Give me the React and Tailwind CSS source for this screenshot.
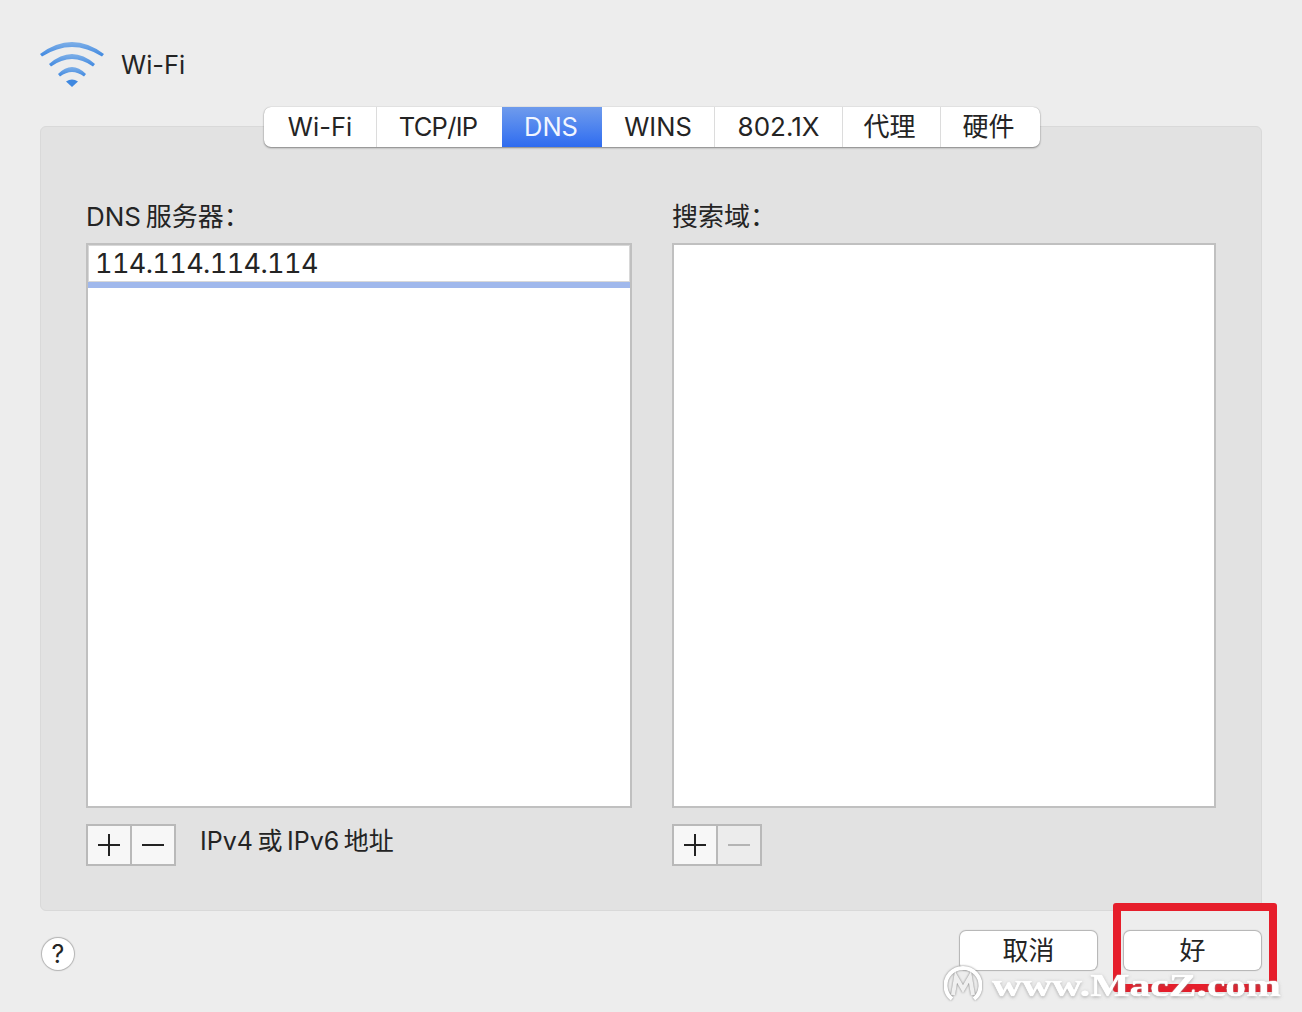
import React from 'react';

const FONT = "font-['Inter','Noto_Sans_CJK_SC',sans-serif]";

const TABS = [
  { label: 'Wi-Fi', width: 'w-[113px]' },
  { label: 'TCP/IP', width: 'w-[125px]', tight: true },
  { label: 'DNS', width: 'w-[100px]', active: true },
  { label: 'WINS', width: 'w-[113px]' },
  { label: '802.1X', width: 'w-[128px]', wide: true },
  { label: '代理', width: 'w-[98px]', cjk: true },
  { label: '硬件', width: 'w-[99px]', cjk: true },
];

const WifiIcon = () => (
  <svg width="64" height="46" viewBox="40 42 64 46">
    <defs>
      <linearGradient id="wifi" x1="0" y1="0" x2="0" y2="1">
        <stop offset="0" stopColor="#7fb0e8" />
        <stop offset="1" stopColor="#3f88e0" />
      </linearGradient>
    </defs>
    <path d="M40 55 Q72 31 104 55 L102 57.5 Q72 38.5 42 57.5 Z" fill="url(#wifi)" />
    <path d="M49 65 Q72 45 95 65 L93 67.5 Q72 52.5 51 67.5 Z" fill="url(#wifi)" />
    <path d="M58 75 Q72 61 86 75 L84 77.5 Q72 68.5 60 77.5 Z" fill="url(#wifi)" />
    <path d="M66 82.5 Q72 78.5 78 82.5 L72 88 Z" fill="#3f88e0" />
  </svg>
);

const PlusIcon = () => (
  <svg width="24" height="24" viewBox="0 0 24 24" stroke="#222" strokeWidth="2">
    <path d="M1 12H23M12 1V23" />
  </svg>
);

const MinusIcon = ({ color }) => (
  <svg width="24" height="24" viewBox="0 0 24 24" stroke={color} strokeWidth="2">
    <path d="M1 12H23" />
  </svg>
);

const AddRemove = ({ removeEnabled }) => (
  <div className="flex h-[42px] w-[90px] border-2 border-[#b9b9b9]">
    <div className="flex w-[44px] items-center justify-center border-r-2 border-[#b9b9b9] bg-[#f7f7f7]">
      <PlusIcon />
    </div>
    <div className={`flex flex-1 items-center justify-center ${removeEnabled ? 'bg-[#f7f7f7]' : 'bg-[#ececec]'}`}>
      <MinusIcon color={removeEnabled ? '#222' : '#b4b4b4'} />
    </div>
  </div>
);

const Watermark = () => (
  <div className="absolute left-[944px] top-[965px] flex items-center gap-[10px]">
    <svg width="38" height="40" viewBox="0 0 38 40" fill="none" stroke="#fff" strokeWidth="4" className="drop-shadow-[0_0_1px_rgba(110,110,110,0.9)]">
      <path d="M8 34 A17.5 17.5 0 1 1 30 34" />
      <path d="M9 30 L12 12 L19 24 L26 12 L29 30" stroke="#f0f0f0" strokeWidth="4" />
    </svg>
    <span className="origin-left scale-x-[1.3] whitespace-nowrap font-['Liberation_Serif',serif] text-[32px] font-bold leading-[40px] text-white [text-shadow:0_0_1px_#fff,0_0_1px_#fff,0_1px_3px_rgba(110,110,110,0.7)]">
      www.MacZ.com
    </span>
  </div>
);

const App = () => {
  return (
    <div className={`relative h-[1012px] overflow-hidden bg-[#ededed] px-[40px] pt-[41px] text-[#242424] ${FONT}`}>
      {/* Header */}
      <div className="flex h-[46px] items-center gap-[17px]">
        <WifiIcon />
        <span className="pt-[2px] text-[25.5px] leading-none">Wi-Fi</span>
      </div>

      {/* Tabs */}
      <div className="relative z-10 ml-[224px] mt-[20px] flex h-[40px] w-[776px] overflow-hidden rounded-[7px] bg-white shadow-[0_1px_2px_rgba(0,0,0,0.4),0_0_1px_rgba(0,0,0,0.3)]">
        {TABS.map((tab, i) => (
          <div
            key={tab.label}
            className={`flex items-center justify-center leading-none ${tab.width} ${tab.cjk ? 'pr-[4px] text-[26px]' : tab.wide ? 'text-[26px]' : 'text-[25.5px]'} ${tab.tight ? 'pr-[3px] tracking-[-0.7px]' : ''} ${
              tab.active
                ? 'bg-gradient-to-b from-[#6f9bec] to-[#2e6bf0] pr-[2px] text-[#f2f6ff]'
                : i < TABS.length - 1 && !TABS[i + 1].active
                  ? 'border-r border-[#dcdcdc]'
                  : ''
            }`}
          >
            {tab.label}
          </div>
        ))}
      </div>

      {/* Panel */}
      <div className="-mt-[21px] h-[785px] rounded-[6px] border border-[#d9d9d9] bg-[#e2e2e2] px-[45px] pt-[72px]">
        <div className="flex gap-[40px]">
          <div className="w-[546px]">
            <div className="text-[26px] leading-[36px]">DNS{'\u2009'}服务器：</div>
            <div className="mt-[8px] h-[565px] border-2 border-[#c0c0c0] bg-white">
              <div className="flex h-[37px] items-center pl-[7px] text-[27px] leading-none tracking-[-0.6px] tabular-nums shadow-[inset_0_0_0_1px_#d8d8d8]">
                114.114.114.114
              </div>
              <div className="h-[6px] bg-[#a0b8ec]" />
            </div>
            <div className="mt-[16px] flex items-start gap-[24px]">
              <AddRemove removeEnabled />
              <span className="text-[25px] leading-[34px]">IPv4{'\u2009'}或{'\u2009'}IPv6{'\u2009'}地址</span>
            </div>
          </div>

          <div className="w-[544px]">
            <div className="text-[26px] leading-[36px]">搜索域：</div>
            <div className="mt-[8px] h-[565px] border-2 border-[#c0c0c0] bg-white" />
            <div className="mt-[16px]">
              <AddRemove removeEnabled={false} />
            </div>
          </div>
        </div>
      </div>

      {/* Footer */}
      <div className="flex items-start justify-between pl-[2px] pr-[1px]">
        <div className="mt-[27px] flex h-[32px] w-[32px] items-center justify-center rounded-full bg-white text-[25px] leading-none shadow-[0_0_1px_1px_rgba(0,0,0,0.25)]">
          ?
        </div>
        <div className="mt-[20px] flex gap-[27px]">
          <div className="flex h-[39px] w-[137px] items-center justify-center rounded-[6px] bg-white text-[26px] leading-none shadow-[0_0_1px_1px_rgba(0,0,0,0.25)]">
            取消
          </div>
          <div className="flex h-[39px] w-[137px] items-center justify-center rounded-[6px] bg-white text-[26px] leading-none shadow-[0_0_1px_1px_rgba(0,0,0,0.25)]">
            好
          </div>
        </div>
      </div>

      {/* Red annotation and watermark sit over the window */}
      <div className="absolute left-[1113px] top-[903px] h-[89px] w-[164px] rounded-[3px] border-[8px] border-[#e61e2b]" />
      <Watermark />
    </div>
  );
};

export default App;
